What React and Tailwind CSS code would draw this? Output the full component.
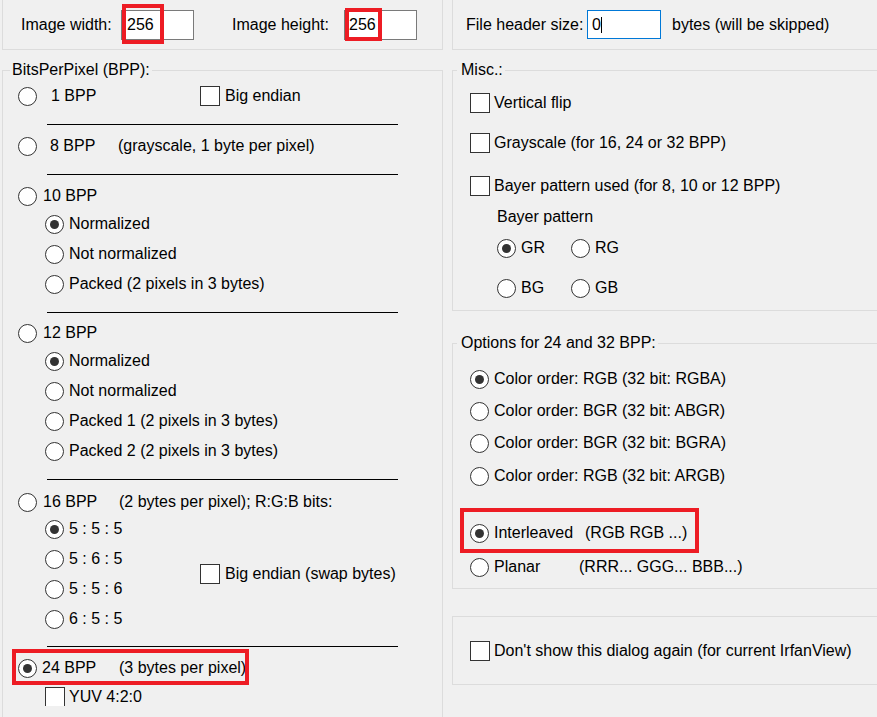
import React from "react";

function Radio({ checked }) {
  return (
    <span className="w-[19px] h-[19px] rounded-full border border-[#333333] bg-white flex items-center justify-center shrink-0">
      {checked && <span className="w-[9px] h-[9px] rounded-full bg-[#333333]" />}
    </span>
  );
}

function Check() {
  return <span className="w-[20px] h-[20px] border border-[#333333] bg-white shrink-0 block" />;
}

function Sep({ mt }) {
  return <div className={`${mt} ml-[44px] w-[351px] h-px bg-black`} />;
}

function SubRadio({ checked, label, mt }) {
  return (
    <div className={`${mt} h-[20px] flex items-center pl-[42px]`}>
      <Radio checked={checked} />
      <span className="ml-[5px] whitespace-nowrap">{label}</span>
    </div>
  );
}

function RgbRadio({ checked, label, mt }) {
  return (
    <div className={`${mt} h-[20px] flex items-center`}>
      <Radio checked={checked} />
      <span className="ml-[5px] whitespace-nowrap">{label}</span>
    </div>
  );
}

export default function App() {
  return (
    <div className="w-[877px] h-[717px] overflow-hidden bg-[#f0f0f0] text-black text-[16px] leading-none font-['Liberation_Sans',Arial,sans-serif]">
      <div className="flex pl-[2px]">
        {/* Left column */}
        <div className="w-[441px] shrink-0">
          <div className="h-[50px] border-l border-r border-b border-[#dcdcdc] flex items-center pl-[18px]">
            <span className="w-[100px] whitespace-nowrap">Image width:</span>
            <div className="relative w-[73px] h-[30px] border border-[#7a7a7a] bg-white flex items-center pl-[5px]">
              <span>256</span>
              <div className="absolute left-0 top-[-7px] w-[42px] h-[40px] border-4 border-[#ed1c24]" />
            </div>
            <span className="ml-[38px] w-[112px] whitespace-nowrap">Image height:</span>
            <div className="relative w-[73px] h-[30px] border border-[#7a7a7a] bg-white flex items-center pl-[4px]">
              <span>256</span>
              <div className="absolute left-0 top-[-3px] w-[37px] h-[33px] border-4 border-[#ed1c24]" />
            </div>
          </div>

          <fieldset className="mt-[12px] h-[700px] border border-[#dcdcdc]">
            <legend className="ml-[7px] px-[2px] leading-none">BitsPerPixel (BPP):</legend>
            <div className="flex flex-col pt-[8px]">
              <div className="h-[20px] flex items-center pl-[15px]">
                <Radio />
                <span className="ml-[14px] w-[149px] whitespace-nowrap">1 BPP</span>
                <Check />
                <span className="ml-[5px] whitespace-nowrap">Big endian</span>
              </div>
              <Sep mt="mt-[18px]" />
              <div className="mt-[11px] h-[20px] flex items-center pl-[15px]">
                <Radio />
                <span className="ml-[13px] w-[68px] whitespace-nowrap">8 BPP</span>
                <span className="whitespace-nowrap">(grayscale, 1 byte per pixel)</span>
              </div>
              <Sep mt="mt-[18px]" />
              <div className="mt-[11px] h-[20px] flex items-center pl-[15px]">
                <Radio />
                <span className="ml-[6px] whitespace-nowrap">10 BPP</span>
              </div>
              <SubRadio mt="mt-[8px]" checked label="Normalized" />
              <SubRadio mt="mt-[10px]" label="Not normalized" />
              <SubRadio mt="mt-[10px]" label="Packed (2 pixels in 3 bytes)" />
              <Sep mt="mt-[18px]" />
              <div className="mt-[10px] h-[20px] flex items-center pl-[15px]">
                <Radio />
                <span className="ml-[6px] whitespace-nowrap">12 BPP</span>
              </div>
              <SubRadio mt="mt-[8px]" checked label="Normalized" />
              <SubRadio mt="mt-[10px]" label="Not normalized" />
              <SubRadio mt="mt-[10px]" label="Packed 1 (2 pixels in 3 bytes)" />
              <SubRadio mt="mt-[10px]" label="Packed 2 (2 pixels in 3 bytes)" />
              <Sep mt="mt-[18px]" />
              <div className="mt-[12px] h-[20px] flex items-center pl-[15px]">
                <Radio />
                <span className="ml-[6px] w-[76px] whitespace-nowrap">16 BPP</span>
                <span className="whitespace-nowrap">(2 bytes per pixel); R:G:B bits:</span>
              </div>
              <div className="mt-[7px] flex items-center">
                <div className="w-[197px] flex flex-col">
                  <SubRadio mt="mt-0" checked label="5 : 5 : 5" />
                  <SubRadio mt="mt-[10px]" label="5 : 6 : 5" />
                  <SubRadio mt="mt-[10px]" label="5 : 5 : 6" />
                  <SubRadio mt="mt-[10px]" label="6 : 5 : 5" />
                </div>
                <Check />
                <span className="ml-[5px] whitespace-nowrap">Big endian (swap bytes)</span>
              </div>
              <Sep mt="mt-[17px]" />
              <div className="relative mt-[11px] h-[20px] flex items-center pl-[15px]">
                <Radio checked />
                <span className="ml-[5px] w-[77px] whitespace-nowrap">24 BPP</span>
                <span className="whitespace-nowrap">(3 bytes per pixel)</span>
                <div className="absolute left-[9px] top-[-9px] w-[237px] h-[36px] border-4 border-[#ed1c24]" />
              </div>
              <div className="mt-[9px] h-[19px] overflow-hidden flex items-start pl-[42px]">
                <Check />
                <span className="ml-[4px] self-center whitespace-nowrap">YUV 4:2:0</span>
              </div>
            </div>
          </fieldset>
        </div>

        {/* Right column */}
        <div className="ml-[9px] w-[460px] shrink-0">
          <div className="h-[50px] border-l border-b border-[#dcdcdc] flex items-center pl-[13px]">
            <span className="w-[121px] whitespace-nowrap">File header size:</span>
            <div className="w-[74px] h-[29px] border border-[#0078d7] bg-white flex items-center pl-[4px]">
              <span>0</span>
              <span className="w-px h-[16px] bg-black" />
            </div>
            <span className="ml-[11px] whitespace-nowrap">bytes (will be skipped)</span>
          </div>

          <fieldset className="mt-[12px] h-[249px] border border-[#dcdcdc]">
            <legend className="ml-[4px] pl-[4px] pr-[2px] leading-none">Misc.:</legend>
            <div className="flex flex-col pt-[15px] pl-[17px]">
              <div className="h-[20px] flex items-center">
                <Check />
                <span className="ml-[4px] whitespace-nowrap">Vertical flip</span>
              </div>
              <div className="mt-[20px] h-[20px] flex items-center">
                <Check />
                <span className="ml-[4px] whitespace-nowrap">Grayscale (for 16, 24 or 32 BPP)</span>
              </div>
              <div className="mt-[23px] h-[20px] flex items-center">
                <Check />
                <span className="ml-[4px] whitespace-nowrap">Bayer pattern used (for 8, 10 or 12 BPP)</span>
              </div>
              <div className="mt-[11px] h-[20px] flex items-center pl-[27px]">
                <span className="whitespace-nowrap">Bayer pattern</span>
              </div>
              <div className="mt-[11px] h-[20px] flex items-center pl-[27px]">
                <div className="w-[74px] flex items-center">
                  <Radio checked />
                  <span className="ml-[5px]">GR</span>
                </div>
                <Radio />
                <span className="ml-[5px]">RG</span>
              </div>
              <div className="mt-[20px] h-[20px] flex items-center pl-[27px]">
                <div className="w-[74px] flex items-center">
                  <Radio />
                  <span className="ml-[5px]">BG</span>
                </div>
                <Radio />
                <span className="ml-[5px]">GB</span>
              </div>
            </div>
          </fieldset>

          <fieldset className="mt-[24px] h-[254px] border border-[#dcdcdc]">
            <legend className="ml-[4px] pl-[4px] pr-[2px] leading-none">Options for 24 and 32 BPP:</legend>
            <div className="flex flex-col pt-[18px] pl-[17px]">
              <RgbRadio mt="mt-0" checked label="Color order: RGB (32 bit: RGBA)" />
              <RgbRadio mt="mt-[12px]" label="Color order: BGR (32 bit: ABGR)" />
              <RgbRadio mt="mt-[12px]" label="Color order: BGR (32 bit: BGRA)" />
              <RgbRadio mt="mt-[13px]" label="Color order: RGB (32 bit: ARGB)" />
              <div className="relative mt-[37px] h-[20px] flex items-center">
                <Radio checked />
                <span className="ml-[5px] w-[91px] whitespace-nowrap">Interleaved</span>
                <span className="whitespace-nowrap">(RGB RGB ...)</span>
                <div className="absolute left-[-10px] top-[-15px] w-[239px] h-[45px] border-4 border-[#ed1c24]" />
              </div>
              <div className="mt-[14px] h-[20px] flex items-center">
                <Radio />
                <span className="ml-[5px] w-[85px] whitespace-nowrap">Planar</span>
                <span className="whitespace-nowrap">(RRR... GGG... BBB...)</span>
              </div>
            </div>
          </fieldset>

          <div className="mt-[27px] h-[69px] border border-[#dcdcdc] flex items-center pl-[17px]">
            <Check />
            <span className="ml-[4px] whitespace-nowrap">Don't show this dialog again (for current IrfanView)</span>
          </div>
        </div>
      </div>
    </div>
  );
}
